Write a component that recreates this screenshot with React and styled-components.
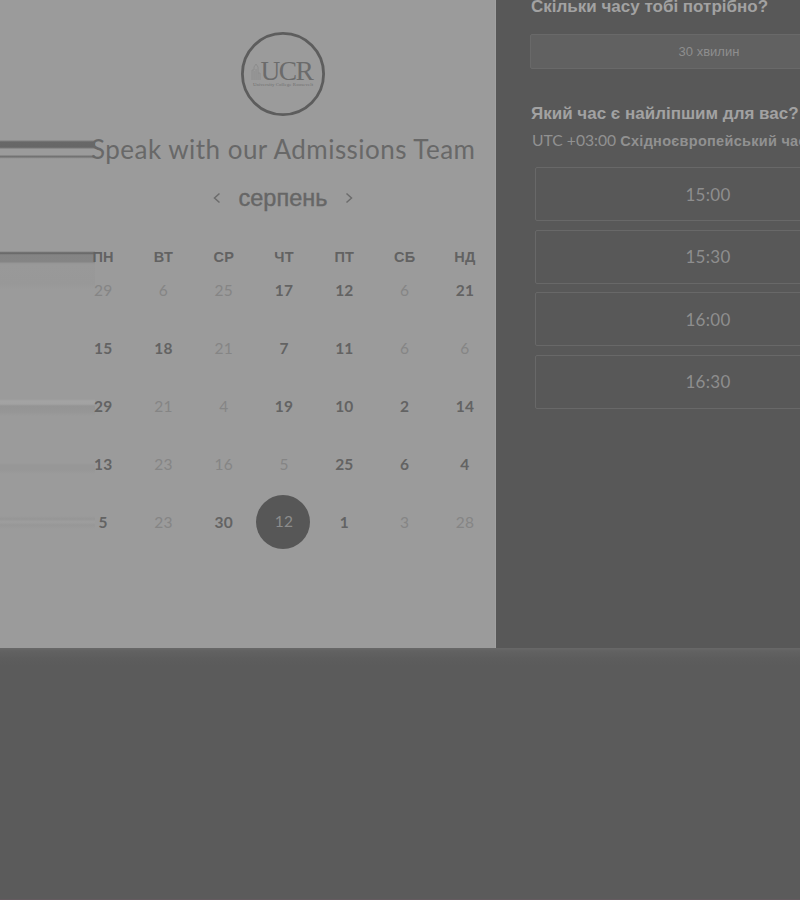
import React from "react";
import styled, { createGlobalStyle } from "styled-components";

const GlobalStyle = createGlobalStyle`
  * { box-sizing: border-box; }
  body { margin: 0; background: #5b5b5b; }
`;

const Page = styled.div`
  width: 800px;
  height: 900px;
  overflow: hidden;
  display: flex;
  flex-direction: column;
  background: #5b5b5b;
  border-bottom: 1px solid #655b60;
  font-family: Lato, sans-serif;
  color: #606060;
`;

const Widget = styled.main`
  display: flex;
  height: 648px;
  flex: none;
`;

const Footer = styled.footer`
  flex: 1;
  background: linear-gradient(#686868 0, #626262 3px, #5d5d5d 10px, #5b5b5b 18px);
`;

const CalendarPanel = styled.section`
  width: 496px;
  flex: none;
  display: flex;
  flex-direction: column;
  padding: 32px 0 0 73px;
  border-right: 1px solid #a1a1a1;
  background:
    linear-gradient(
      transparent 139px, #7d7d7d 140px, #686868 141px, #666 146px, #777 147px,
      #9b9b9b 148px, #9b9b9b 154px, #757575 155px, #707070 156px, #929292 157px,
      transparent 158px, transparent 250px, #858585 251px, #5e5e5e 252px,
      #777 253px, #848484 254px, #858585 261px, #959595 262px, #999 264px,
      #989898 282px, transparent 288px, transparent 398px, #a3a3a3 400px,
      #a2a2a2 403px, #949494 405px, #969696 411px, transparent 415px,
      transparent 462px, #979797 464px, #979797 469px, transparent 473px,
      transparent 515px, #969696 518px, #9e9e9e 521px, #979797 524px, transparent 528px
    ) 0 0.7px / 95px 100% no-repeat,
    #9b9b9b;
`;

const Logo = styled.svg`
  display: block;
  width: 84px;
  height: 84px;
  margin-left: 168px;
  flex: none;
`;

const Title = styled.h1`
  margin: 15px 0 0 18px;
  height: 36px;
  font: 400 26px/36px Lato, sans-serif;
  letter-spacing: 0.47px;
  white-space: nowrap;
  color: #686868;
`;

const MonthNav = styled.nav`
  display: flex;
  align-items: center;
  justify-content: center;
  gap: 17px;
  width: 420px;
  height: 32px;
  margin-top: 15px;
`;

const Month = styled.h2`
  margin: 0;
  font: 400 23.5px/32px "Liberation Sans", sans-serif;
  -webkit-text-stroke: 0.4px #666;
  color: #666;
`;

const Chevron = styled.svg`
  width: 10px;
  height: 14px;
  fill: none;
  stroke: #6c6c6c;
  stroke-width: 1.5;
`;

const WeekGrid = styled.div`
  display: grid;
  grid-template-columns: repeat(7, 60.3px);
  justify-items: center;
`;

const Weekdays = styled(WeekGrid)`
  margin-top: 33px;
  height: 20px;
  font: 700 14.5px/20px "Liberation Sans", sans-serif;
  letter-spacing: 0.2px;
  color: #626262;
`;

const Days = styled(WeekGrid)`
  margin-top: -6px;
  grid-auto-rows: 58px;
  align-items: center;
`;

const Day = styled.span`
  display: flex;
  align-items: center;
  justify-content: center;
  width: 54px;
  height: 54px;
  border-radius: 50%;
  font-size: 15.5px;
  letter-spacing: 0.2px;
  font-weight: ${(p) => (p.$state === "open" ? 700 : 400)};
  color: ${(p) => ({ open: "#636363", off: "#858585", selected: "#8c8c8c" })[p.$state]};
  background: ${(p) => (p.$state === "selected" ? "#575757" : "transparent")};
  margin: ${(p) => (p.$state === "selected" ? "-1px 2px 0 0" : "0")};
  padding: ${(p) => (p.$state === "selected" ? "0 0 2px 2px" : "0")};
`;

const TimePanel = styled.section`
  flex: 1;
  min-width: 0;
  overflow: hidden;
  padding: 0 0 0 34px;
  background: #585858;
  color: #a2a2a2;
`;

const Question = styled.h3`
  margin: 0 0 0 1px;
  height: 24px;
  font: 700 17px/24px "Liberation Sans", sans-serif;
  white-space: nowrap;
`;

const DurationQuestion = styled(Question)`
  margin-top: -5px;
`;

const Duration = styled.button`
  display: block;
  width: 358px;
  height: 35px;
  margin: 15px 0 33px;
  padding: 0;
  border: 1px solid #696969;
  border-radius: 2px;
  background: #616161;
  color: #8e8e8e;
  font: 400 13px/32px "Liberation Sans", sans-serif;
`;

const Timezone = styled.div`
  margin: 4px 0 0 2px;
  height: 20px;
  font: 400 15.7px/20px Lato, sans-serif;
  white-space: nowrap;
  color: #919191;
`;

const ZoneName = styled.strong`
  font: 700 14.5px/20px "Liberation Sans", sans-serif;
  letter-spacing: 0.28px;
`;

const Slots = styled.div`
  display: grid;
  width: 346px;
  margin: 17px 0 0 5px;
  grid-auto-rows: 54px;
  gap: 8.5px;
`;

const Slot = styled.button`
  padding: 0;
  border: 1px solid #686868;
  border-radius: 2px;
  background: transparent;
  color: #8e8e8e;
  font: 400 17px/51px Lato, sans-serif;
  letter-spacing: 0.3px;
`;

const weekdays = ["ПН", "ВТ", "СР", "ЧТ", "ПТ", "СБ", "НД"];
const days = [
  [29, 0], [6, 0], [25, 0], [17, 1], [12, 1], [6, 0], [21, 1],
  [15, 1], [18, 1], [21, 0], [7, 1], [11, 1], [6, 0], [6, 0],
  [29, 1], [21, 0], [4, 0], [19, 1], [10, 1], [2, 1], [14, 1],
  [13, 1], [23, 0], [16, 0], [5, 0], [25, 1], [6, 1], [4, 1],
  [5, 1], [23, 0], [30, 1], [12, 2], [1, 1], [3, 0], [28, 0],
];
const states = ["off", "open", "selected"];
const slots = ["15:00", "15:30", "16:00", "16:30"];

export default function App() {
  return (
    <Page>
      <GlobalStyle />
      <Widget>
        <CalendarPanel>
          <Logo viewBox="0 0 84 84">
            <circle cx="42" cy="42" r="40.6" fill="none" stroke="#5d5d5d" strokeWidth="2.8" />
            <path d="M11 48V38h2v-3l2-3 2 3v13M13 39v9M15 37v11M17 41h2v7" fill="none" stroke="#8c8c8c" strokeWidth="1" />
            <text x="19.5" y="48" fontFamily="Liberation Serif, serif" fontSize="27.5" letterSpacing="-1.6" fill="#6b6b6b">UCR</text>
            <text x="12" y="54" fontFamily="Liberation Serif, serif" fontSize="4.8" textLength="60" fill="#6f6f6f">University College Roosevelt</text>
          </Logo>
          <Title>Speak with our Admissions Team</Title>
          <MonthNav>
            <Chevron viewBox="0 0 10 14"><path d="M7.5 2.5 2.5 7l5 4.5" /></Chevron>
            <Month>серпень</Month>
            <Chevron viewBox="0 0 10 14"><path d="m2.5 2.5 5 4.5-5 4.5" /></Chevron>
          </MonthNav>
          <Weekdays>
            {weekdays.map((d) => <span key={d}>{d}</span>)}
          </Weekdays>
          <Days>
            {days.map(([n, s], i) => <Day key={i} $state={states[s]}>{n}</Day>)}
          </Days>
        </CalendarPanel>
        <TimePanel>
          <DurationQuestion>Скільки часу тобі потрібно?</DurationQuestion>
          <Duration>30 хвилин</Duration>
          <Question>Який час є найліпшим для вас?</Question>
          <Timezone>UTC +03:00 <ZoneName>Східноєвропейський час</ZoneName></Timezone>
          <Slots>
            {slots.map((t) => <Slot key={t}>{t}</Slot>)}
          </Slots>
        </TimePanel>
      </Widget>
      <Footer />
    </Page>
  );
}
